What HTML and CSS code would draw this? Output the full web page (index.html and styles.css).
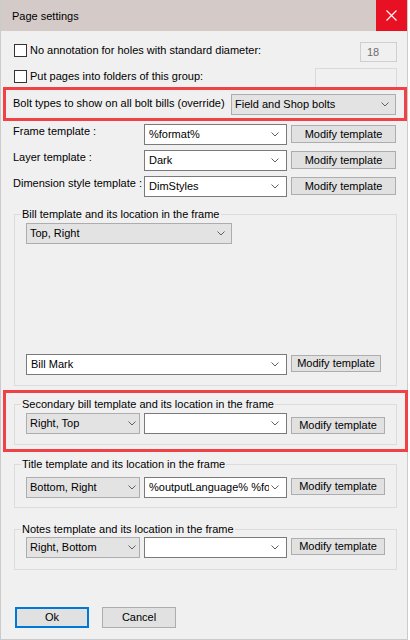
FILE: index.html
```html
<!DOCTYPE html>
<html>
<head>
<meta charset="utf-8">
<link rel="stylesheet" href="styles.css">
</head>
<body>
<div class="window">
  <div class="titlebar">
    <span class="title">Page settings</span>
    <div class="close">
      <svg width="11" height="11" viewBox="0 0 11 11"><path d="M0.5 0.5 L10.5 10.5 M10.5 0.5 L0.5 10.5" stroke="#fff" stroke-width="1.1" fill="none"/></svg>
    </div>
  </div>
  <div class="content">
    <div class="check-row">
      <span class="cb"></span>
      <span class="cb-label">No annotation for holes with standard diameter:</span>
      <span class="num-input">18</span>
    </div>
    <div class="check-row second">
      <span class="cb"></span>
      <span class="cb-label">Put pages into folders of this group:</span>
      <span class="text-input"></span>
    </div>
    <div class="row bolt-row">
      <span class="label bolt-label">Bolt types to show on all bolt bills (override)</span>
      <div class="dropdown bolt-select"><span class="val">Field and Shop bolts</span><svg class="chev" width="8" height="5" viewBox="0 0 8 5"><path d="M0.5 0.5 L4 4 L7.5 0.5" fill="none" stroke="#606060"/></svg></div>
    </div>
    <div class="row tpl-row first">
      <span class="label tpl-label">Frame template :</span>
      <div class="combo"><span class="val">%format%</span><svg class="chev" width="8" height="5" viewBox="0 0 8 5"><path d="M0.5 0.5 L4 4 L7.5 0.5" fill="none" stroke="#606060"/></svg></div>
      <button class="btn btn-tpl">Modify template</button>
    </div>
    <div class="row tpl-row">
      <span class="label tpl-label">Layer template :</span>
      <div class="combo"><span class="val">Dark</span><svg class="chev" width="8" height="5" viewBox="0 0 8 5"><path d="M0.5 0.5 L4 4 L7.5 0.5" fill="none" stroke="#606060"/></svg></div>
      <button class="btn btn-tpl">Modify template</button>
    </div>
    <div class="row tpl-row">
      <span class="label tpl-label">Dimension style template :</span>
      <div class="combo"><span class="val">DimStyles</span><svg class="chev" width="8" height="5" viewBox="0 0 8 5"><path d="M0.5 0.5 L4 4 L7.5 0.5" fill="none" stroke="#606060"/></svg></div>
      <button class="btn btn-tpl">Modify template</button>
    </div>

    <fieldset class="group group-bill">
      <legend>Bill template and its location in the frame</legend>
      <div class="group-row">
        <div class="dropdown dd-wide"><span class="val">Top, Right</span><svg class="chev" width="8" height="5" viewBox="0 0 8 5"><path d="M0.5 0.5 L4 4 L7.5 0.5" fill="none" stroke="#606060"/></svg></div>
      </div>
      <div class="group-row bill-bottom">
        <div class="combo combo-bill"><span class="val">Bill Mark</span><svg class="chev" width="8" height="5" viewBox="0 0 8 5"><path d="M0.5 0.5 L4 4 L7.5 0.5" fill="none" stroke="#606060"/></svg></div>
        <button class="btn btn-grp btn-bill">Modify template</button>
      </div>
    </fieldset>

    <fieldset class="group group-secondary">
      <legend>Secondary bill template and its location in the frame</legend>
      <div class="group-row">
        <div class="dropdown dd-small"><span class="val">Right, Top</span><svg class="chev" width="8" height="5" viewBox="0 0 8 5"><path d="M0.5 0.5 L4 4 L7.5 0.5" fill="none" stroke="#606060"/></svg></div>
        <div class="combo"><span class="val"></span><svg class="chev" width="8" height="5" viewBox="0 0 8 5"><path d="M0.5 0.5 L4 4 L7.5 0.5" fill="none" stroke="#606060"/></svg></div>
        <button class="btn btn-grp btn-low">Modify template</button>
      </div>
    </fieldset>

    <fieldset class="group group-title">
      <legend>Title template and its location in the frame</legend>
      <div class="group-row">
        <div class="dropdown dd-small"><span class="val">Bottom, Right</span><svg class="chev" width="8" height="5" viewBox="0 0 8 5"><path d="M0.5 0.5 L4 4 L7.5 0.5" fill="none" stroke="#606060"/></svg></div>
        <div class="combo"><span class="val clip">%outputLanguage% %format%</span><svg class="chev" width="8" height="5" viewBox="0 0 8 5"><path d="M0.5 0.5 L4 4 L7.5 0.5" fill="none" stroke="#606060"/></svg></div>
        <button class="btn btn-grp">Modify template</button>
      </div>
    </fieldset>

    <fieldset class="group group-notes">
      <legend>Notes template and its location in the frame</legend>
      <div class="group-row">
        <div class="dropdown dd-small"><span class="val">Right, Bottom</span><svg class="chev" width="8" height="5" viewBox="0 0 8 5"><path d="M0.5 0.5 L4 4 L7.5 0.5" fill="none" stroke="#606060"/></svg></div>
        <div class="combo"><span class="val"></span><svg class="chev" width="8" height="5" viewBox="0 0 8 5"><path d="M0.5 0.5 L4 4 L7.5 0.5" fill="none" stroke="#606060"/></svg></div>
        <button class="btn btn-grp">Modify template</button>
      </div>
    </fieldset>

    <div class="actions">
      <button class="btn btn-action btn-ok">Ok</button>
      <button class="btn btn-action btn-cancel">Cancel</button>
    </div>
  </div>
  <div class="highlight highlight-bolt"></div>
  <div class="highlight highlight-secondary"></div>
</div>
</body>
</html>
```

FILE: styles.css
```css
html, body {
  margin: 0;
  padding: 0;
  background: #ffffff;
}

body {
  font-family: "Liberation Sans", Arial, sans-serif;
  font-size: 11px;
  color: #000;
}

.window {
  position: relative;
  width: 408px;
  height: 640px;
  box-sizing: border-box;
  background: #f0f0f0;
  border: 1px solid #cbcbcb;
  border-top: none;
}

.titlebar {
  display: flex;
  align-items: center;
  height: 31px;
  background: #d4cbc8;
}

.title {
  padding-left: 11px;
  font-size: 11px;
  color: #000;
  line-height: 13px;
  padding-top: 1px;
}

.close {
  margin-left: auto;
  width: 31px;
  height: 31px;
  background: #e81123;
  display: flex;
  align-items: center;
  justify-content: center;
}

.content {
  padding: 0 10px 0 12px;
}

/* checkbox rows */
.check-row {
  display: flex;
  align-items: flex-start;
  height: 20px;
  margin-top: 11px;
}

.check-row.second {
  margin-top: 6px;
}

.cb {
  width: 13px;
  height: 13px;
  box-sizing: border-box;
  border: 1px solid #333;
  background: #fff;
  margin: 2px 0 0 1px;
  flex: none;
}

.cb-label {
  margin-left: 3px;
  line-height: 13px;
  padding-top: 2px;
  white-space: nowrap;
}

.num-input {
  margin-left: auto;
  width: 37px;
  height: 20px;
  box-sizing: border-box;
  border: 1px solid #cfcfcf;
  background: #f0f0f0;
  color: #6d6d6d;
  line-height: 18px;
  padding-left: 6px;
}

.text-input {
  margin-left: auto;
  width: 82px;
  height: 20px;
  box-sizing: border-box;
  border: 1px solid #d9d9d9;
  background: #f0f0f0;
}

/* generic rows */
.row {
  display: flex;
  align-items: flex-start;
  height: 21px;
}

.label {
  flex: none;
  line-height: 13px;
  white-space: nowrap;
}

.bolt-row {
  margin-top: 6px;
}

.bolt-label {
  width: 218px;
  padding-top: 3px;
}

.tpl-row {
  margin-top: 5px;
}

.tpl-row.first {
  margin-top: 9px;
}

.tpl-label {
  width: 131px;
  padding-top: 1px;
}

/* dropdowns / combos */
.dropdown,
.combo {
  display: flex;
  align-items: center;
  height: 21px;
  box-sizing: border-box;
  flex: none;
  overflow: hidden;
}

.dropdown {
  background: #e3e3e3;
  border: 1px solid #adadad;
  padding-left: 3px;
}

.combo {
  width: 143px;
  background: #ffffff;
  border: 1px solid #7a7a7a;
  padding-left: 4px;
}

.val {
  flex: 1;
  white-space: nowrap;
  overflow: hidden;
  line-height: 13px;
}

.val.clip {
  text-overflow: clip;
}

.chev {
  flex: none;
  margin-right: 6px;
  margin-left: 2px;
}

.combo .chev {
  margin-right: 7px;
}

.bolt-select {
  width: 165px;
}

.dd-wide {
  width: 206px;
}

.dd-small {
  width: 114px;
}

.dd-small .chev {
  margin-right: 3px;
}

.combo-bill {
  width: 261px;
}

/* buttons */
.btn {
  font-family: inherit;
  font-size: 11px;
  color: #000;
  background: #e1e1e1;
  border: 1px solid #adadad;
  padding: 0;
  margin: 0;
  box-sizing: border-box;
  line-height: 13px;
  flex: none;
}

.btn-tpl {
  width: 105px;
  height: 18px;
  margin-left: 4px;
  margin-top: 1px;
}

.btn-grp {
  width: 94px;
  height: 17px;
  margin-left: 4px;
  margin-top: 1px;
}

.btn-grp.btn-low {
  margin-top: 4px;
}

.btn-bill {
  width: 90px;
}

/* group boxes */
.group {
  margin: 0 0 0 1px;
  border: 1px solid #dcdcdc;
  padding: 0 0 0 6px;
  min-width: 0;
}

.group legend {
  padding: 0 1px;
  line-height: 13px;
  white-space: nowrap;
}

.group-row {
  display: flex;
  align-items: flex-start;
  gap: 4px;
  margin-left: 5px;
  height: 21px;
}

.group-row .btn-grp {
  margin-left: 0;
}

.group-bill {
  margin-top: 11px;
  padding-top: 2px;
  padding-bottom: 10px;
}

.bill-bottom {
  margin-top: 110px;
}

.group-secondary {
  margin-top: 12px;
  padding-top: 2px;
  padding-bottom: 10px;
}

.group-title {
  margin-top: 13px;
  padding-top: 6px;
  padding-bottom: 9px;
}

.group-notes {
  margin-top: 15px;
  padding-top: 1px;
  padding-bottom: 11px;
}

/* bottom buttons */
.actions {
  display: flex;
  margin-top: 37px;
  padding-left: 2px;
  gap: 13px;
}

.btn-action {
  width: 74px;
  height: 21px;
}

.btn-ok {
  border: 2px solid #0078d7;
}

/* red annotation overlays */
.highlight {
  position: absolute;
  box-sizing: border-box;
  border: 3px solid #ef4146;
  pointer-events: none;
}

.highlight-bolt {
  left: 2px;
  top: 87px;
  width: 404px;
  height: 34px;
}

.highlight-secondary {
  left: 2px;
  top: 390px;
  width: 405px;
  height: 62px;
}
```
